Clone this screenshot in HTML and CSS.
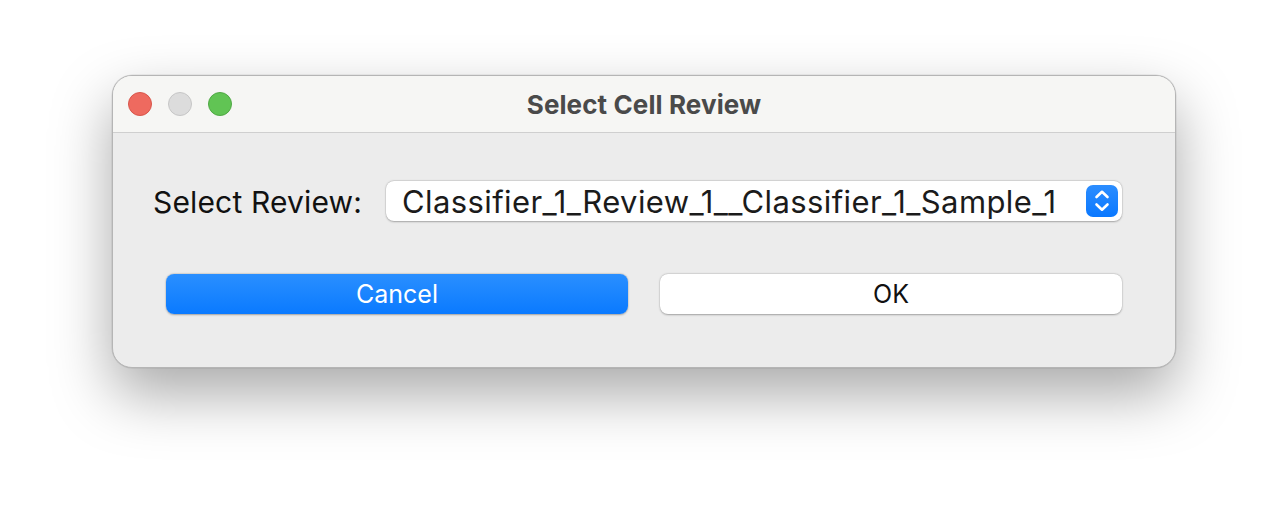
FILE: index.html
```html
<!DOCTYPE html>
<html>
<head>
<meta charset="utf-8">
<link rel="stylesheet" href="styles.css">
</head>
<body>
<div class="window">
  <div class="titlebar">
    <div class="lights">
      <span class="light red"></span>
      <span class="light grey"></span>
      <span class="light green"></span>
    </div>
    <div class="title">Select Cell Review</div>
  </div>
  <div class="content">
    <div class="row">
      <label class="label">Select Review:</label>
      <div class="popup">
        <span class="popup-text">Classifier_1_Review_1__Classifier_1_Sample_1</span>
        <span class="stepper">
          <svg width="32" height="32" viewBox="0 0 32 32">
            <path d="M10.5 12 L16 6.8 L21.5 12" fill="none" stroke="#fff" stroke-width="2.6" stroke-linecap="round" stroke-linejoin="round"/>
            <path d="M10.5 19.5 L16 24.7 L21.5 19.5" fill="none" stroke="#fff" stroke-width="2.6" stroke-linecap="round" stroke-linejoin="round"/>
          </svg>
        </span>
      </div>
    </div>
    <div class="buttons">
      <button class="btn primary">Cancel</button>
      <button class="btn">OK</button>
    </div>
  </div>
</div>
</body>
</html>
```
FILE: styles.css
```css
html, body {
  margin: 0;
  padding: 0;
  background: #ffffff;
}
body {
  width: 1288px;
  height: 516px;
  overflow: hidden;
  display: flex;
  justify-content: center;
  align-items: flex-start;
  padding-top: 75px;
  box-sizing: border-box;
  font-family: "Inter", "Helvetica Neue", "Liberation Sans", sans-serif;
}
.window {
  width: 1064px;
  height: 293px;
  box-sizing: border-box;
  border-radius: 20px;
  background: #ececec;
  border: 1px solid #b5b5b5;
  box-shadow: 0 26px 60px rgba(0, 0, 0, 0.34), 0 0 0 0.5px rgba(0,0,0,0.1);
  overflow: hidden;
  display: flex;
  flex-direction: column;
}
.titlebar {
  position: relative;
  height: 56px;
  flex: none;
  background: #f6f6f4;
  border-bottom: 1px solid #cfcfcf;
  display: flex;
  align-items: center;
  justify-content: center;
}
.lights {
  position: absolute;
  left: 15px;
  top: 16px;
  display: flex;
  gap: 16px;
}
.light {
  width: 24px;
  height: 24px;
  border-radius: 50%;
  box-sizing: border-box;
}
.red { background: #ee6a5f; border: 1px solid #d8564b; }
.grey { background: #dcdcdc; border: 1px solid #c6c6c6; }
.green { background: #61c454; border: 1px solid #50a845; }
.title {
  font-size: 26px;
  font-weight: 700;
  color: #4a4a4a;
  letter-spacing: 0.1px;
}
.content {
  flex: 1;
  padding: 48px 53px 0 40px;
}
.row {
  display: flex;
  align-items: center;
  height: 40px;
}
.label {
  font-size: 30px;
  letter-spacing: 0.15px;
  color: #111;
  width: 233px;
  padding-top: 2px;
}
.popup {
  flex: 1;
  height: 40px;
  background: #fff;
  border-radius: 8px;
  box-shadow: 0 0.5px 2px rgba(0,0,0,0.28), 0 0 0 0.5px rgba(0,0,0,0.08);
  display: flex;
  align-items: center;
  justify-content: space-between;
  padding: 0 4px 0 16px;
}
.popup-text {
  font-size: 31px;
  letter-spacing: 0.4px;
  color: #1b1b1b;
  padding-top: 1px;
}
.stepper {
  width: 32px;
  height: 32px;
  border-radius: 7px;
  background: linear-gradient(#2b8dff, #0a78ff);
  display: flex;
}
.buttons {
  display: grid;
  grid-template-columns: 1fr 1fr;
  gap: 32px;
  margin-top: 53px;
  padding-left: 13px;
}
.btn {
  height: 40px;
  border: none;
  border-radius: 8px;
  background: #fff;
  box-shadow: 0 0.5px 2px rgba(0,0,0,0.3), 0 0 0 0.5px rgba(0,0,0,0.06);
  font-family: inherit;
  font-size: 25px;
  color: #111;
  padding: 0;
}
.btn.primary {
  background: linear-gradient(#2a8fff, #0a7aff);
  color: #fff;
}
```
